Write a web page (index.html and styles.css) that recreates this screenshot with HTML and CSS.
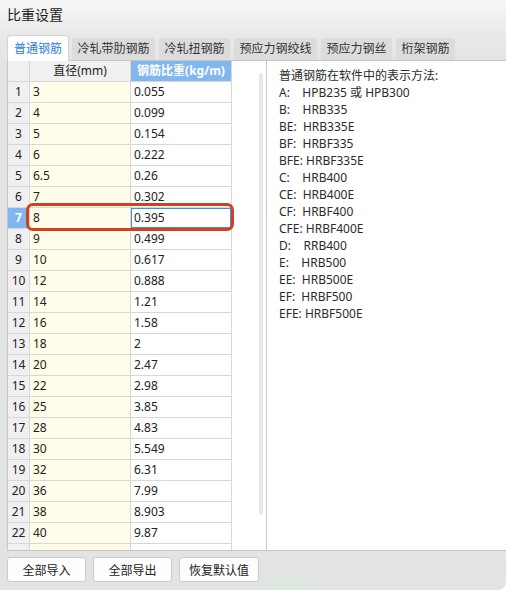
FILE: index.html
```html
<!DOCTYPE html>
<html lang="zh-CN">
<head>
<meta charset="utf-8">
<title>比重设置</title>
<link rel="stylesheet" href="styles.css">
</head>
<body>
<div class="window">
  <div class="title">比重设置</div>
  <div class="tabs">
    <div class="tab active">普通钢筋</div>
    <div class="tab">冷轧带肋钢筋</div>
    <div class="tab">冷轧扭钢筋</div>
    <div class="tab">预应力钢绞线</div>
    <div class="tab">预应力钢丝</div>
    <div class="tab">桁架钢筋</div>
  </div>
  <div class="panel">
    <div class="table-wrap">
      <div class="grid">
        <div class="c hdr corner"></div>
        <div class="c hdr">直径(mm)</div>
        <div class="c hdr sel-col">钢筋比重(kg/m)</div>

        <div class="c num">1</div><div class="c dia">3</div><div class="c val">0.055</div>
        <div class="c num">2</div><div class="c dia">4</div><div class="c val">0.099</div>
        <div class="c num">3</div><div class="c dia">5</div><div class="c val">0.154</div>
        <div class="c num">4</div><div class="c dia">6</div><div class="c val">0.222</div>
        <div class="c num">5</div><div class="c dia">6.5</div><div class="c val">0.26</div>
        <div class="c num">6</div><div class="c dia">7</div><div class="c val">0.302</div>
        <div class="c num cur">7</div><div class="c dia">8</div><div class="c val focus">0.395</div>
        <div class="c num">8</div><div class="c dia">9</div><div class="c val">0.499</div>
        <div class="c num">9</div><div class="c dia">10</div><div class="c val">0.617</div>
        <div class="c num">10</div><div class="c dia">12</div><div class="c val">0.888</div>
        <div class="c num">11</div><div class="c dia">14</div><div class="c val">1.21</div>
        <div class="c num">12</div><div class="c dia">16</div><div class="c val">1.58</div>
        <div class="c num">13</div><div class="c dia">18</div><div class="c val">2</div>
        <div class="c num">14</div><div class="c dia">20</div><div class="c val">2.47</div>
        <div class="c num">15</div><div class="c dia">22</div><div class="c val">2.98</div>
        <div class="c num">16</div><div class="c dia">25</div><div class="c val">3.85</div>
        <div class="c num">17</div><div class="c dia">28</div><div class="c val">4.83</div>
        <div class="c num">18</div><div class="c dia">30</div><div class="c val">5.549</div>
        <div class="c num">19</div><div class="c dia">32</div><div class="c val">6.31</div>
        <div class="c num">20</div><div class="c dia">36</div><div class="c val">7.99</div>
        <div class="c num">21</div><div class="c dia">38</div><div class="c val">8.903</div>
        <div class="c num">22</div><div class="c dia">40</div><div class="c val">9.87</div>
        <div class="c num"></div><div class="c dia"></div><div class="c val"></div>
      </div>
      <div class="scroll-track"></div>
    </div>
    <div class="info">
<div class="line">普通钢筋在软件中的表示方法:</div>
<div class="line">A:    HPB235 或 HPB300</div>
<div class="line">B:    HRB335</div>
<div class="line">BE:  HRB335E</div>
<div class="line">BF:  HRBF335</div>
<div class="line">BFE: HRBF335E</div>
<div class="line">C:    HRB400</div>
<div class="line">CE:  HRB400E</div>
<div class="line">CF:  HRBF400</div>
<div class="line">CFE: HRBF400E</div>
<div class="line">D:    RRB400</div>
<div class="line">E:    HRB500</div>
<div class="line">EE:  HRB500E</div>
<div class="line">EF:  HRBF500</div>
<div class="line">EFE: HRBF500E</div>
    </div>
  </div>
  <div class="buttons">
    <button class="btn">全部导入</button>
    <button class="btn">全部导出</button>
    <button class="btn">恢复默认值</button>
  </div>
  <div class="mark"></div>
</div>
</body>
</html>
```

FILE: styles.css
```css
html, body {
  margin: 0;
  padding: 0;
  background: #ffffff;
}
body {
  font-family: "Noto Sans", "Noto Sans CJK SC", sans-serif;
  color: #222;
}
.window {
  position: relative;
  width: 506px;
  height: 590px;
  overflow: hidden;
  border-radius: 0 0 8px 0;
  background:
    radial-gradient(ellipse 34px 26px at 286px 592px, rgba(214, 236, 222, 0.9), rgba(214, 236, 222, 0) 100%),
    linear-gradient(to bottom, #f7f7f7 0px, #e9e9e9 34px, #e4e4e4 60px, #e3e3e3 100%);
  display: flex;
  flex-direction: column;
}
.title {
  height: 35px;
  box-sizing: border-box;
  padding: 6px 0 0 7px;
  font-size: 14px;
  line-height: 18px;
  color: #1f1f1f;
}
.tabs {
  height: 25px;
  display: flex;
  align-items: flex-end;
  gap: 4px;
  padding-left: 7px;
  position: relative;
  z-index: 2;
}
.tab {
  height: 22px;
  line-height: 22px;
  padding: 0 5.5px;
  font-size: 12px;
  color: #333;
  background: #dcdcdc;
  border-radius: 3px 3px 0 0;
}
.tab.active {
  height: 26px;
  line-height: 25px;
  margin-bottom: -1px;
  padding: 0 6px;
  background: #ffffff;
  color: #2a7be0;
  box-sizing: border-box;
  border: 1px solid #d2d2d2;
  border-bottom: none;
  border-radius: 4px 4px 0 0;
}
.tab.active + .tab {
  margin-left: -1px;
}
.panel {
  margin-left: 7px;
  height: 491px;
  box-sizing: border-box;
  border-top: 1px solid #c6c6c6;
  border-left: 1px solid #c6c6c6;
  border-bottom: 1px solid #c6c6c6;
  background: #ffffff;
  display: flex;
}
.table-wrap {
  width: 259px;
  box-sizing: border-box;
  border-right: 1px solid #c8c8c8;
  display: flex;
  overflow: hidden;
}
.grid {
  display: grid;
  grid-template-columns: 21px 100px 100px;
  grid-auto-rows: 20px;
  gap: 1px;
  background: #d7d7d7;
  border-right: 1px solid #d7d7d7;
  align-self: flex-start;
  font-size: 12px;
}
.c {
  line-height: 20px;
  white-space: nowrap;
  overflow: hidden;
  color: #222;
}
.hdr {
  background: #f0f0f0;
  text-align: center;
  color: #222;
}
.hdr.sel-col {
  background: #80b7ef;
  color: #ffffff;
  font-weight: 700;
}
.num {
  background: #f0f0f0;
  text-align: center;
}
.num.cur {
  background: #80b7ef;
  color: #ffffff;
  font-weight: 700;
}
.dia {
  background: #fffde9;
  padding-left: 3px;
}
.val {
  background: #ffffff;
  padding-left: 3px;
}
.val.focus {
  box-shadow: inset 0 0 0 1px #3f8fe2;
}
.scroll-track {
  margin-left: auto;
  margin-right: 3px;
  margin-top: 12px;
  width: 4px;
  height: 442px;
  border-radius: 2px;
  background: #e8e8e8;
}
.info {
  flex: 1;
  padding: 6px 0 0 12px;
  font-size: 12px;
  line-height: 17px;
  color: #2b2b2b;
}
.line {
  white-space: pre;
}
.buttons {
  display: flex;
  gap: 7px;
  padding: 6px 0 0 7px;
}
.btn {
  width: 79px;
  height: 25px;
  padding: 0;
  font-family: "Noto Sans", "Noto Sans CJK SC", sans-serif;
  font-size: 12px;
  color: #222;
  background: #fdfdfd;
  border: 1px solid #cbcbcb;
  border-radius: 3px;
}
.btn:last-child {
  width: 80px;
}
.mark {
  position: absolute;
  left: 26px;
  top: 203px;
  width: 208px;
  height: 28px;
  box-sizing: border-box;
  border: 3px solid #d2401c;
  border-radius: 7px;
  pointer-events: none;
}
```
